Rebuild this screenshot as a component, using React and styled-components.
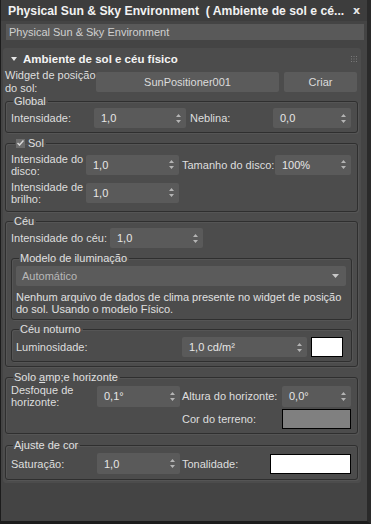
import React from "react";
import styled, { createGlobalStyle } from "styled-components";

const GlobalStyle = createGlobalStyle`
  html, body { margin: 0; padding: 0; background: #444444; }
  * { box-sizing: border-box; }
`;

const Window = styled.div`
  width: 371px;
  height: 524px;
  background: #444444;
  border-left: 1px solid #1c1c1c;
  border-right: 4px solid #2a2a2a;
  border-bottom: 3px solid #1c1c1c;
  display: flex;
  flex-direction: column;
  font-family: "Liberation Sans", Arial, sans-serif;
  font-size: 11px;
  color: #dedede;
  overflow: hidden;
`;

const TitleBar = styled.div`
  height: 21px;
  background: #3d3d3d;
  display: flex;
  align-items: center;
  justify-content: space-between;
  padding: 0 7px 0 7px;
  font-weight: bold;
  font-size: 12.2px;
  color: #f2f2f2;
  white-space: pre;
`;

const Close = styled.span`
  font-family: "DejaVu Sans", sans-serif;
  font-size: 11px;
  font-weight: bold;
  color: #e8e8e8;
`;

const NameField = styled.div`
  margin: 3px 3px 0 5px;
  height: 16px;
  line-height: 16px;
  background: #595959;
  color: #d0d0d0;
  padding-left: 3px;
`;

const Rollout = styled.div`
  margin: 8px 6px 0 2px;
  background: #4c4c4c;
  border-radius: 3px;
  padding: 0 3px 3px 2px;
`;

const RolloutHeader = styled.div`
  height: 21px;
  display: flex;
  align-items: center;
  gap: 6px;
  padding-left: 6px;
  font-weight: bold;
  font-size: 11.5px;
  color: #f4f4f4;
`;

const HeaderTitle = styled.span`
  flex: 1;
`;

const Grip = styled.svg`
  margin-right: 1px;
`;

const Row = styled.div`
  display: flex;
  align-items: center;
  min-height: ${p => p.$h || 20}px;
  margin-top: ${p => p.$mt || 0}px;
`;

const Label = styled.div`
  width: ${p => p.$w}px;
  flex: none;
  line-height: ${p => p.$lh || 12}px;
  padding-left: ${p => p.$pl || 0}px;
  white-space: ${p => (p.$wrap ? "normal" : "nowrap")};
`;

const Button = styled.div`
  width: ${p => p.$w}px;
  height: 20px;
  flex: none;
  margin-left: ${p => p.$ml || 0}px;
  background: #5b5b5b;
  border-radius: 2px;
  display: flex;
  align-items: center;
  justify-content: center;
  color: #dcdcdc;
`;

const Group = styled.fieldset`
  margin: ${p => p.$m || "0"};
  padding: ${p => p.$p || "0 5px 4px 4px"};
  border: 1px solid #2f2f2f;
  border-radius: 3px;
  box-shadow: inset 1px 1px 0 #555, 1px 1px 0 #555;
  min-width: 0;
`;

const Legend = styled.legend`
  padding: 0 2px 0 1px;
  margin-left: ${p => p.$ml || 3}px;
  line-height: 12px;
  height: 12px;
  display: flex;
  align-items: center;
  gap: 3px;
  color: #e0e0e0;
`;

const SpinBox = styled.div`
  width: ${p => p.$w}px;
  height: ${p => p.$h || 20}px;
  flex: none;
  background: #5a5a5a;
  border-radius: 2px;
  display: flex;
  align-items: center;
  padding: 0 5px 0 7px;
  color: #e6e6e6;
`;

const SpinValue = styled.span`
  flex: 1;
`;

const Spinner = ({ w, h, value }) => (
  <SpinBox $w={w} $h={h}>
    <SpinValue>{value}</SpinValue>
    <svg width="5" height="9" viewBox="0 0 5 9">
      <path d="M2.5 0 L5 3 L0 3 Z M0 6 L5 6 L2.5 9 Z" fill="#b4b4b4" />
    </svg>
  </SpinBox>
);

const Swatch = styled.div`
  width: ${p => p.$w}px;
  height: ${p => p.$h || 20}px;
  flex: none;
  margin-left: ${p => p.$ml || 0}px;
  background: ${p => p.$color};
  border: 1px solid #000;
`;

const Check = styled.span`
  width: 9px;
  height: 9px;
  background: #6c6c6c;
  display: inline-flex;
  align-items: center;
  justify-content: center;
`;

const Dropdown = styled.div`
  height: 20px;
  margin-top: 2px;
  background: #5b5b5b;
  border-radius: 2px;
  display: flex;
  align-items: center;
  justify-content: space-between;
  padding: 0 7px 0 6px;
  color: #b8b8b8;
`;

const Note = styled.p`
  margin: 5px 0 0 0;
  line-height: 12px;
  color: #e0e0e0;
`;

const Accel = styled.span`
  text-decoration: underline;
`;

export default function App() {
  return (
    <>
      <GlobalStyle />
      <Window>
        <TitleBar>
          <span>Physical Sun &amp; Sky Environment  ( Ambiente de sol e cé...</span>
          <Close>x</Close>
        </TitleBar>
        <NameField>Physical Sun &amp; Sky Environment</NameField>
        <Rollout>
          <RolloutHeader>
            <svg width="6" height="4" viewBox="0 0 6 4">
              <path d="M0 0 L6 0 L3 4 Z" fill="#e6e6e6" />
            </svg>
            <HeaderTitle>Ambiente de sol e céu físico</HeaderTitle>
            <Grip width="6" height="6" viewBox="0 0 6 6">
              {[0, 2.5, 5].map(x =>
                [0, 2.5, 5].map(y => (
                  <rect key={`${x}-${y}`} x={x} y={y} width="1" height="1" fill="#7a7a7a" />
                ))
              )}
            </Grip>
          </RolloutHeader>

          <Row $h={26}>
            <Label $w={91} $lh={13} $wrap>Widget de posição do sol:</Label>
            <Button $w={183}>SunPositioner001</Button>
            <Button $w={73} $ml={5}>Criar</Button>
          </Row>

          <Group $m="0 0 0 0">
            <Legend>Global</Legend>
            <Row $mt={1}>
              <Label $w={84} $pl={1}>Intensidade:</Label>
              <Spinner w={92} value="1,0" />
              <Label $w={87} $pl={4}>Neblina:</Label>
              <Spinner w={78} value="0,0" />
            </Row>
          </Group>

          <Group $m="4px 0 0 0" $p="0 5px 6px 4px">
            <Legend $ml={5}>
              <Check>
                <svg width="7" height="6" viewBox="0 0 7 6">
                  <path d="M0.5 3 L2.5 5 L6.5 0.5" stroke="#d8d8d8" strokeWidth="1.5" fill="none" />
                </svg>
              </Check>
              Sol
            </Legend>
            <Row $h={25} $mt={3}>
              <Label $w={76} $pl={1} $wrap>Intensidade do disco:</Label>
              <Spinner w={93} value="1,0" />
              <Label $w={96} $pl={3}>Tamanho do disco:</Label>
              <Spinner w={76} value="100%" />
            </Row>
            <Row $h={25} $mt={3}>
              <Label $w={76} $pl={1} $wrap>Intensidade de brilho:</Label>
              <Spinner w={93} value="1,0" />
            </Row>
          </Group>

          <Group $m="3px 0 0 0">
            <Legend>Céu</Legend>
            <Row $mt={1}>
              <Label $w={100} $pl={1}>Intensidade do céu:</Label>
              <Spinner w={93} value="1,0" />
            </Row>
            <Group $m="4px 0 0 1px" $p="0 5px 4px 4px">
              <Legend>Modelo de iluminação</Legend>
              <Dropdown>
                <span>Automático</span>
                <svg width="7" height="4" viewBox="0 0 7 4">
                  <path d="M0 0 L7 0 L3.5 4 Z" fill="#c8c8c8" />
                </svg>
              </Dropdown>
              <Note>
                Nenhum arquivo de dados de clima presente no widget de posição do sol. Usando o modelo Físico.
              </Note>
            </Group>
            <Group $m="3px 0 0 1px" $p="0 6px 4px 4px">
              <Legend>Céu noturno</Legend>
              <Row $mt={2}>
                <Label $w={166}>Luminosidade:</Label>
                <Spinner w={125} value="1,0 cd/m²" />
                <Swatch $w={32} $ml={4} $color="#ffffff" />
              </Row>
            </Group>
          </Group>

          <Group $m="4px 0 0 0">
            <Legend>
              <span>
                Solo <Accel>a</Accel>mp;e horizonte
              </span>
            </Legend>
            <Row $h={24} $mt={1}>
              <Label $w={87} $pl={1} $wrap>Desfoque de horizonte:</Label>
              <Spinner w={83} h={21} value="0,1°" />
              <Label $w={102} $pl={2}>Altura do horizonte:</Label>
              <Spinner w={69} h={21} value="0,0°" />
            </Row>
            <Row $mt={1}>
              <Label $w={170} />
              <Label $w={102} $pl={2}>Cor do terreno:</Label>
              <Swatch $w={69} $color="#808080" />
            </Row>
          </Group>

          <Group $m="5px 0 0 0" $p="0 5px 5px 4px">
            <Legend>Ajuste de cor</Legend>
            <Row $mt={2} $h={21}>
              <Label $w={87} $pl={1}>Saturação:</Label>
              <Spinner w={83} h={21} value="1,0" />
              <Label $w={90} $pl={2}>Tonalidade:</Label>
              <Swatch $w={81} $color="#ffffff" />
            </Row>
          </Group>
        </Rollout>
      </Window>
    </>
  );
}
